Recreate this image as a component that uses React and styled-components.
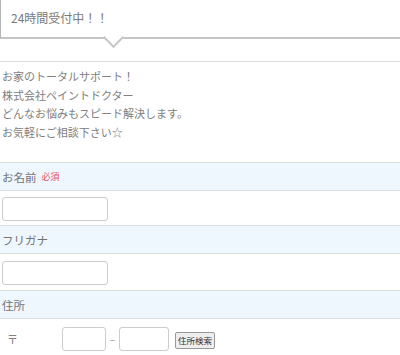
import React from "react";
import styled, { createGlobalStyle } from "styled-components";

const Global = createGlobalStyle`
  html, body { margin: 0; padding: 0; background: #fff; }
  body { font-family: "Noto Sans CJK JP", "Noto Sans", sans-serif; color: #808080; }
  * { box-sizing: border-box; }
`;

const Page = styled.div`
  width: 400px;
  overflow: hidden;
`;

const Balloon = styled.div`
  position: relative;
  margin-top: -1px;
  height: 40px;
  border: 1px solid #b5b5b5;
  border-right: none;
  border-bottom-width: 2px;
  border-bottom-color: #c4c4c4;
  padding: 8px 0 0 10px;
  font-size: 12px;
  color: #7a7a7a;
  line-height: 20px;
  &::after {
    content: "";
    position: absolute;
    left: 105px;
    bottom: -8px;
    width: 13px;
    height: 13px;
    background: #fff;
    border-right: 2px solid #c4c4c4;
    border-bottom: 2px solid #c4c4c4;
    transform: rotate(45deg);
  }
`;

const Intro = styled.div`
  margin-top: 22px;
  border-top: 1px solid #ddd;
  padding: 5px 0 0 2px;
  height: 101px;
  font-size: 11px;
  line-height: 18.5px;
  color: #808080;
`;

const Header = styled.div`
  display: flex;
  align-items: center;
  gap: 5px;
  height: 29px;
  background: #eef6fe;
  border-top: 1px solid #ddd;
  border-bottom: 1px solid #ddd;
  padding-left: 2px;
  font-size: 11.5px;
  color: #737373;
`;

const Required = styled.span`
  font-size: 9px;
  color: #e8536a;
`;

const Field = styled.div`
  display: flex;
  align-items: flex-start;
  height: ${(p) => p.$h || 35}px;
  padding: ${(p) => p.$pt || 6}px 0 0 2px;
`;

const TextInput = styled.input`
  width: ${(p) => p.$w || 106}px;
  height: 24px;
  border: 1px solid #ccc;
  border-radius: 3px;
  background: #fff;
  padding: 0 4px;
  outline: none;
`;

const ZipRow = styled.div`
  display: flex;
  align-items: flex-start;
  height: 36px;
  padding-top: 8px;
`;

const ZipMark = styled.span`
  width: 62px;
  padding-left: 7px;
  font-size: 11px;
  line-height: 24px;
  color: #808080;
`;

const Dash = styled.span`
  width: 13px;
  text-align: center;
  font-size: 11px;
  line-height: 24px;
  color: #999;
`;

const SearchButton = styled.button`
  margin-left: 6px;
  margin-top: 5px;
  height: 17px;
  padding: 0 2px;
  font-family: "Noto Sans CJK JP", sans-serif;
  font-size: 8.5px;
  line-height: 15px;
  color: #333;
  background: #eee;
  border: 1px solid #999;
  border-radius: 2px;
`;

export default function App() {
  return (
    <Page>
      <Global />
      <Balloon>24時間受付中！！</Balloon>
      <Intro>
        お家のトータルサポート！
        <br />
        株式会社ペイントドクター
        <br />
        どんなお悩みもスピード解決します。
        <br />
        お気軽にご相談下さい☆
      </Intro>
      <Header>
        お名前<Required>必須</Required>
      </Header>
      <Field $h={34}>
        <TextInput />
      </Field>
      <Header>フリガナ</Header>
      <Field $h={36} $pt={7}>
        <TextInput />
      </Field>
      <Header>住所</Header>
      <ZipRow>
        <ZipMark>〒</ZipMark>
        <TextInput $w={44} />
        <Dash>–</Dash>
        <TextInput $w={50} />
        <SearchButton>住所検索</SearchButton>
      </ZipRow>
    </Page>
  );
}
